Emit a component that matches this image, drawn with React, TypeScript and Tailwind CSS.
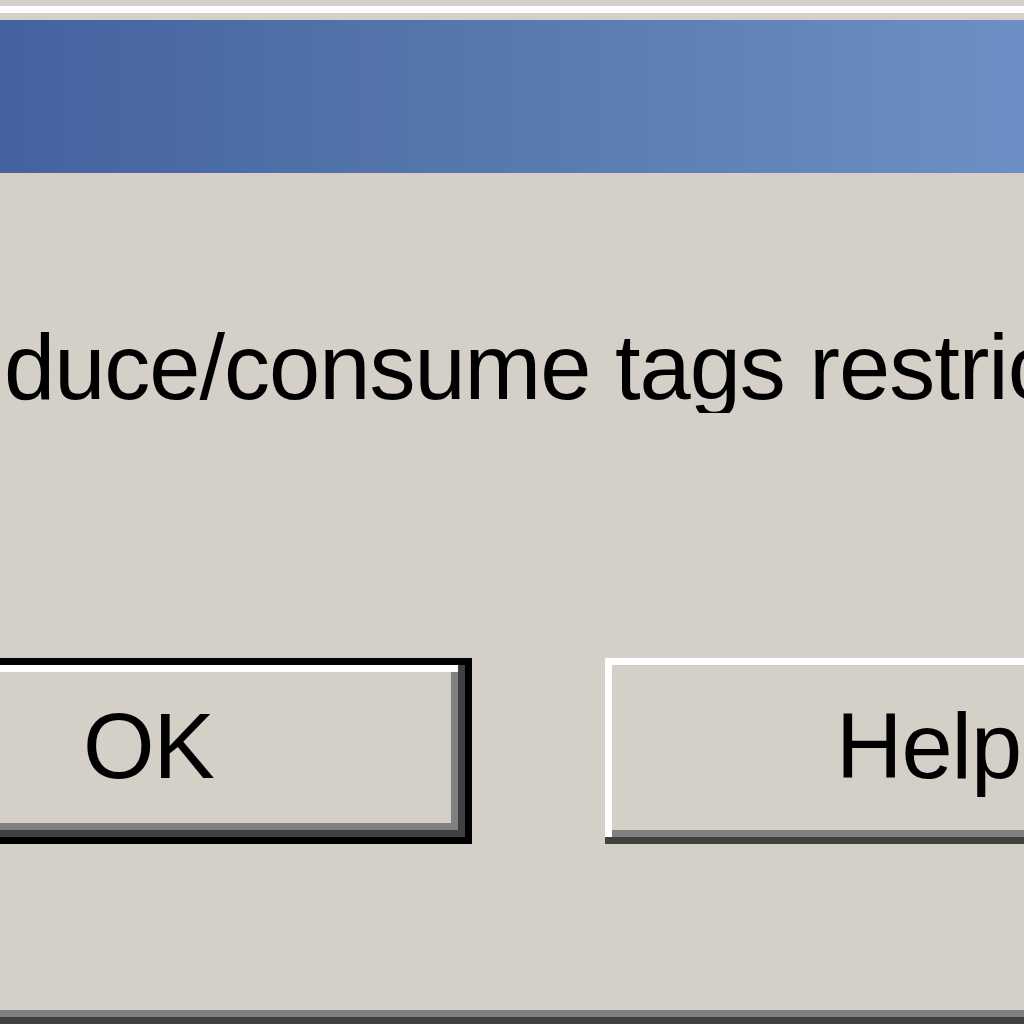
// Classic Windows message box, seen close up (zoomed ~6.7x)

const font = { fontFamily: '"Liberation Sans", Arial, sans-serif' };

export default function App() {
  return (
    <div
      className="w-[1024px] h-[1024px] bg-[#d4d0c8] overflow-hidden flex flex-col text-black"
      style={font}
    >
      {/* window frame top edge */}
      <div className="h-[6px] shrink-0" />
      <div className="h-[7px] shrink-0 bg-white" />
      <div className="h-[7px] shrink-0" />

      {/* title bar */}
      <div className="h-[153px] shrink-0 bg-gradient-to-r from-[#4462a0] via-[#5879ad] to-[#6c90c5]" />

      {/* message */}
      <div className="mt-[148px] h-[92px] pl-[4px] shrink-0 whitespace-nowrap overflow-hidden">
        <p className="text-[92px] leading-[92px] tracking-[-1px]">duce/consume tags restrict</p>
      </div>

      {/* buttons */}
      <div className="mt-[245px] h-[186px] shrink-0 flex">
        {/* default button: black frame around the 3D border */}
        <div className="-ml-[40px] w-[512px] h-[186px] shrink-0 border-[7px] border-black">
          <div className="h-full pl-[116px] pt-[35px] shadow-[inset_-7px_-7px_0_#404040,inset_7px_7px_0_#ffffff,inset_-14px_-14px_0_#808080]">
            <span className="text-[92px] leading-[92px] tracking-[-1px]">OK</span>
          </div>
        </div>

        <div className="ml-[133px] w-[500px] h-[186px] shrink-0 pl-[231px] pt-[42px] shadow-[inset_-7px_-7px_0_#404040,inset_7px_7px_0_#ffffff,inset_-14px_-14px_0_#808080]">
          <span className="text-[92px] leading-[92px] tracking-[-1px]">Help</span>
        </div>
      </div>

      <div className="flex-1" />

      {/* window frame bottom edge */}
      <div className="h-[7px] shrink-0 bg-[#808080]" />
      <div className="h-[7px] shrink-0 bg-[#404040]" />
    </div>
  );
}
